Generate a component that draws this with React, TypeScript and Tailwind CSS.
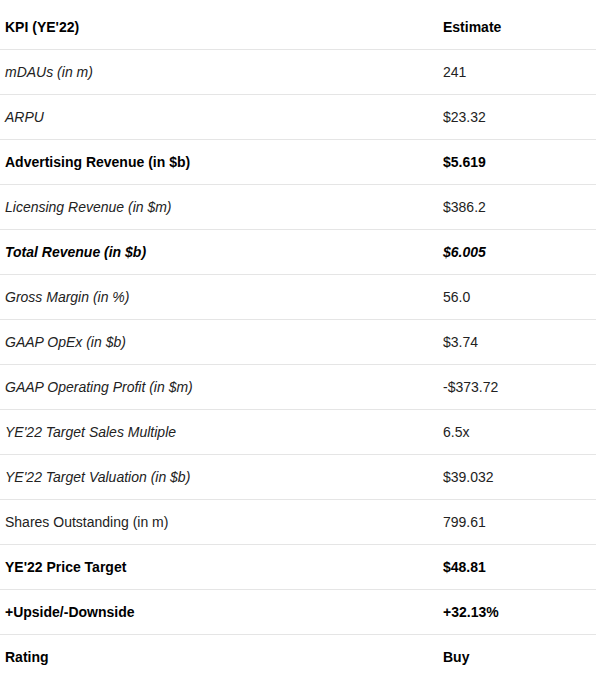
type Row = {
  label: string;
  value: string;
  bold?: boolean;
  italic?: boolean;
  valueItalic?: boolean;
};

const rows: Row[] = [
  { label: 'mDAUs (in m)', value: '241', italic: true },
  { label: 'ARPU', value: '$23.32', italic: true },
  { label: 'Advertising Revenue (in $b)', value: '$5.619', bold: true },
  { label: 'Licensing Revenue (in $m)', value: '$386.2', italic: true },
  { label: 'Total Revenue (in $b)', value: '$6.005', bold: true, italic: true, valueItalic: true },
  { label: 'Gross Margin (in %)', value: '56.0', italic: true },
  { label: 'GAAP OpEx (in $b)', value: '$3.74', italic: true },
  { label: 'GAAP Operating Profit (in $m)', value: '-$373.72', italic: true },
  { label: "YE'22 Target Sales Multiple", value: '6.5x', italic: true },
  { label: "YE'22 Target Valuation (in $b)", value: '$39.032', italic: true },
  { label: 'Shares Outstanding (in m)', value: '799.61' },
  { label: "YE'22 Price Target", value: '$48.81', bold: true },
  { label: '+Upside/-Downside', value: '+32.13%', bold: true },
  { label: 'Rating', value: 'Buy', bold: true },
];

export default function App() {
  return (
    <div className="w-[604px] h-[697px] bg-white pt-[4px] font-['Liberation_Sans',Arial,sans-serif] text-[14px] text-[#222]">
      <table className="w-[596px] border-collapse">
        <thead>
          <tr className="border-b border-[#e5e5e5]">
            <th className="h-[45px] w-[438px] pl-[5px] pt-[2px] text-left font-bold text-black">KPI (YE'22)</th>
            <th className="h-[45px] pl-[5px] pt-[2px] text-left font-bold text-black">Estimate</th>
          </tr>
        </thead>
        <tbody>
          {rows.map((r, i) => (
            <tr key={r.label} className={i < rows.length - 1 ? 'border-b border-[#e5e5e5]' : ''}>
              <td
                className={`h-[45px] pl-[5px] pt-[2px] ${r.bold ? 'font-bold text-black' : ''} ${r.italic ? 'italic' : ''}`}
              >
                {r.label}
              </td>
              <td
                className={`h-[45px] pl-[5px] pt-[2px] ${r.bold ? 'font-bold text-black' : ''} ${r.valueItalic ? 'italic' : ''}`}
              >
                {r.value}
              </td>
            </tr>
          ))}
        </tbody>
      </table>
    </div>
  );
}
